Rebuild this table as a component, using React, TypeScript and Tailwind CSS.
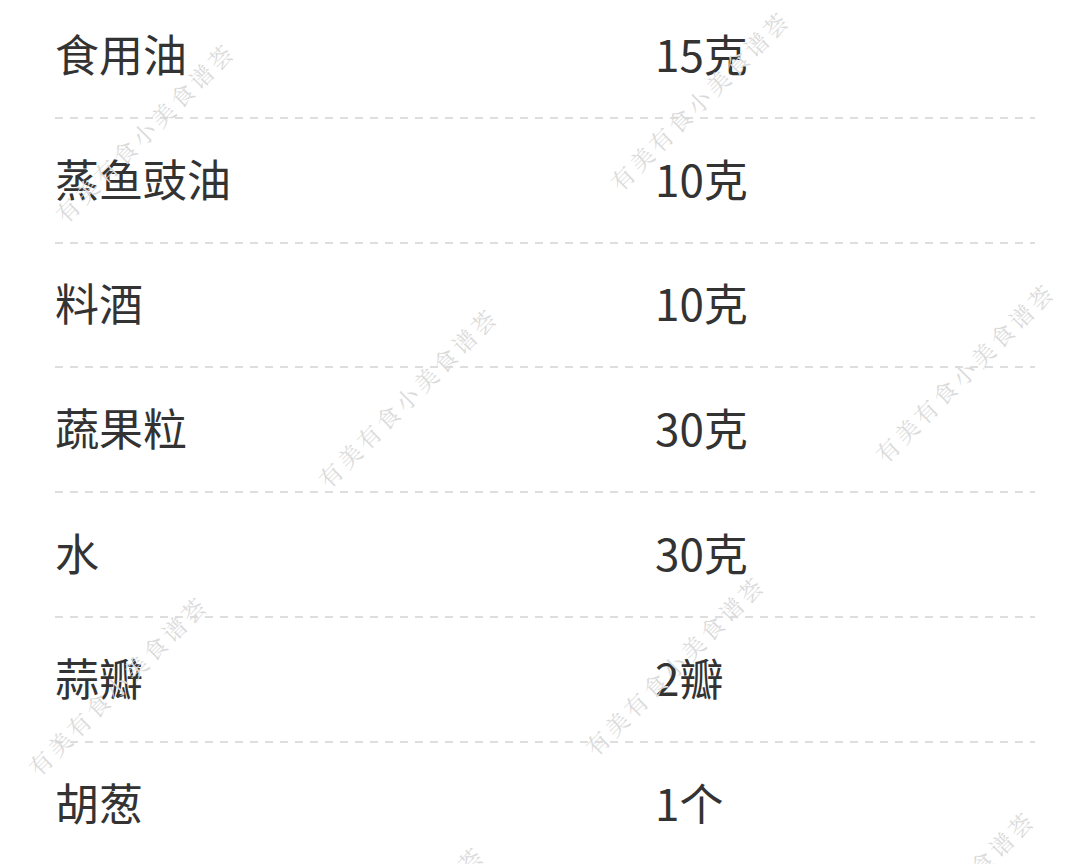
const rows: [string, string][] = [
  ["食用油", "15克"],
  ["蒸鱼豉油", "10克"],
  ["料酒", "10克"],
  ["蔬果粒", "30克"],
  ["水", "30克"],
  ["蒜瓣", "2瓣"],
  ["胡葱", "1个"],
];

// watermark centres, in page pixels
const marks: [number, number][] = [
  [145, 132],
  [700, 100],
  [965, 372],
  [408, 397],
  [675, 665],
  [118, 685],
  [945, 900],
  [395, 935],
];

export default function App() {
  return (
    <div className="relative h-[864px] w-[1080px] overflow-hidden bg-white font-['Noto_Sans_CJK_SC','Noto_Sans',sans-serif] text-[#333333]">
      <div className="-mt-[6px] flex flex-col pl-[55px] pr-[45px]">
        {rows.map(([name, amount], i) => (
          <div key={name} className="flex flex-col">
            <div className="flex h-[122.8px] items-center pb-[5px] text-[44px] leading-none">
              <span className="w-[600px]">{name}</span>
              <span>{amount}</span>
            </div>
            {i < rows.length - 1 && (
              <div className="h-[2px] bg-[repeating-linear-gradient(to_right,#dedede_0_8px,transparent_8px_15px)]" />
            )}
          </div>
        ))}
      </div>
      {marks.map(([x, y]) => (
        <span
          key={`${x}-${y}`}
          className="pointer-events-none absolute -translate-x-1/2 -translate-y-1/2 -rotate-45 whitespace-nowrap text-[23px] leading-none tracking-[4px] text-[#dadada] font-['Noto_Serif_CJK_SC','Noto_Sans_CJK_SC',serif]"
          style={{ left: x, top: y }}
        >
          有美有食小美食谱荟
        </span>
      ))}
    </div>
  );
}
